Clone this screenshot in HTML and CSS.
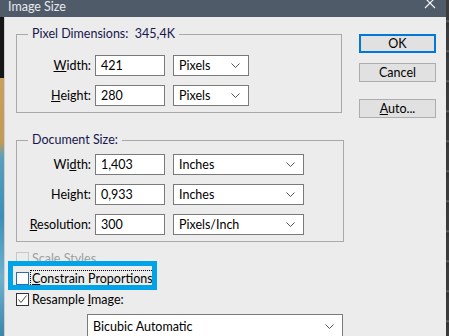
FILE: index.html
```html
<!DOCTYPE html>
<html lang="en">
<head>
    <meta charset="UTF-8">
    <title>Image Size</title>
    <link rel="stylesheet" href="styles.css">
</head>
<body>

<div class="screen">
    <div class="titlebar">
        <span class="title">Image Size</span>
        <svg class="close" width="12" height="12" viewBox="0 0 12 12">
            <path d="M1 1 L11 11 M11 1 L1 11" stroke="#f2f2f2" stroke-width="1.2" fill="none"/>
        </svg>
    </div>
    <div class="strip-left"></div>
    <div class="strip-right"></div>

    <div class="dialog">
        <div class="main">
            <fieldset class="group group-pixels">
                <legend>Pixel Dimensions:&nbsp; 345,4K</legend>
                <div class="row">
                    <label><u>W</u>idth:</label>
                    <div class="field">421</div>
                    <div class="select select-short">Pixels <svg class="chev" width="9" height="5" viewBox="0 0 9 5"><path d="M0.5 0.5 L4.5 4.5 L8.5 0.5" stroke="#555" fill="none"/></svg></div>
                </div>
                <div class="row">
                    <label><u>H</u>eight:</label>
                    <div class="field">280</div>
                    <div class="select select-short">Pixels <svg class="chev" width="9" height="5" viewBox="0 0 9 5"><path d="M0.5 0.5 L4.5 4.5 L8.5 0.5" stroke="#555" fill="none"/></svg></div>
                </div>
            </fieldset>

            <fieldset class="group group-doc">
                <legend>Document Size:</legend>
                <div class="row">
                    <label>Wi<u>d</u>th:</label>
                    <div class="field">1,403</div>
                    <div class="select select-long">Inches <svg class="chev" width="9" height="5" viewBox="0 0 9 5"><path d="M0.5 0.5 L4.5 4.5 L8.5 0.5" stroke="#555" fill="none"/></svg></div>
                </div>
                <div class="row">
                    <label>Hei<u>g</u>ht:</label>
                    <div class="field">0,933</div>
                    <div class="select select-long">Inches <svg class="chev" width="9" height="5" viewBox="0 0 9 5"><path d="M0.5 0.5 L4.5 4.5 L8.5 0.5" stroke="#555" fill="none"/></svg></div>
                </div>
                <div class="row">
                    <label><u>R</u>esolution:</label>
                    <div class="field">300</div>
                    <div class="select select-long">Pixels/Inch <svg class="chev" width="9" height="5" viewBox="0 0 9 5"><path d="M0.5 0.5 L4.5 4.5 L8.5 0.5" stroke="#555" fill="none"/></svg></div>
                </div>
            </fieldset>

            <div class="checks">
                <div class="check disabled">
                    <span class="box"></span>
                    <span class="check-text">Scale Styles</span>
                </div>
                <div class="check focused">
                    <span class="box box-blue"></span>
                    <span class="check-text focus-ring"><u>C</u>onstrain Proportions</span>
                    <div class="highlight"></div>
                </div>
                <div class="check">
                    <span class="box">
                        <svg width="11" height="11" viewBox="0 0 11 11"><path d="M1.5 5.5 L4 8.5 L9.5 1.5" stroke="#333" stroke-width="0.9" fill="none"/></svg>
                    </span>
                    <span class="check-text">Resample <u>I</u>mage:</span>
                </div>
            </div>

            <div class="select select-method">Bicubic Automatic <svg class="chev" width="9" height="5" viewBox="0 0 9 5"><path d="M0.5 0.5 L4.5 4.5 L8.5 0.5" stroke="#555" fill="none"/></svg></div>
        </div>

        <div class="buttons">
            <button class="btn btn-default">OK</button>
            <button class="btn">Cancel</button>
            <button class="btn btn-auto"><u>A</u>uto...</button>
        </div>
    </div>
</div>

</body>
</html>
```

FILE: styles.css
```css
body {
    margin: 0;
    background-color: #2e2e2e;
    font-family: Lato, "Liberation Sans", sans-serif;
    font-size: 12.5px;
    color: #000;
}

.screen {
    display: grid;
    grid-template-columns: 4px 442px 3px;
    grid-template-rows: 17px 319px;
    width: 449px;
    height: 336px;
    overflow: hidden;
}

.titlebar {
    grid-column: 1 / 3;
    grid-row: 1;
    background-color: #505b69;
    display: flex;
    justify-content: space-between;
    align-items: flex-start;
    padding-left: 8px;
    padding-right: 10px;
}

.title {
    color: #e8eaed;
    line-height: 14px;
    font-size: 12.5px;
}

.close {
    margin-top: -3px;
}

.strip-left {
    grid-column: 1;
    grid-row: 2;
    background: linear-gradient(to bottom, #161616 0, #161616 61px, #c9a05c 61px, #c39a58 125px, #5a9fbd 140px, #3d8fb8 200px, #6fb2cf 260px, #3a87ad 319px);
}

.strip-right {
    grid-column: 3;
    grid-row: 1 / 3;
    background: repeating-linear-gradient(to bottom, #3b3b3b 0, #3b3b3b 20px, #6a6a6a 21px, #333 23px, #3b3b3b 30px);
}

.dialog {
    grid-column: 2;
    grid-row: 2;
    background-color: #ececec;
    border-left: 1px solid #cfcfcf;
    display: flex;
    align-items: flex-start;
    padding-left: 11px;
}

.main {
    width: 326px;
    margin-top: 10px;
}

.group {
    margin: 0;
    padding: 0;
    border: 1px solid #a9a9a9;
    min-width: 0;
}

.group legend {
    margin-left: 11px;
    padding: 0 4px;
    line-height: 14px;
    color: #17174d;
}

.group-pixels {
    width: 324px;
    padding-top: 14px;
    padding-bottom: 6px;
}

.group-doc {
    width: 326px;
    margin-top: 20px;
    padding-top: 7px;
    padding-bottom: 6px;
}

.row {
    display: flex;
    align-items: center;
    height: 21px;
    margin-bottom: 9px;
}

.row:last-child {
    margin-bottom: 0;
}

.row label {
    width: 74px;
    margin-right: 4px;
    text-align: right;
}

.field {
    box-sizing: border-box;
    width: 70px;
    height: 21px;
    border: 1px solid #7a7a7a;
    background-color: #fff;
    padding-left: 5px;
    line-height: 19px;
    margin-right: 8px;
}

.select {
    box-sizing: border-box;
    height: 21px;
    border: 1px solid #7a7a7a;
    background-color: #fff;
    padding: 0 8px 0 5px;
    line-height: 19px;
    display: flex;
    justify-content: space-between;
    align-items: center;
}

.select-short {
    width: 76px;
}

.select-long {
    width: 131px;
}

.select-method {
    width: 256px;
    height: 24px;
    margin-left: 71px;
    margin-top: 5px;
}

.checks {
    margin-top: 6px;
}

.check {
    display: flex;
    align-items: center;
    height: 20px;
    position: relative;
}

.check.focused {
    height: 21px;
}

.box {
    box-sizing: border-box;
    width: 13px;
    height: 13px;
    border: 1px solid #333;
    background-color: #fff;
    margin-right: 3px;
    display: flex;
    align-items: center;
    justify-content: center;
}

.box-blue {
    border-color: #2a6fb0;
}

.disabled .box {
    border-color: #c8c8c8;
    background-color: #ececec;
}

.disabled .check-text {
    color: #a0a0a0;
}

.check-text {
    line-height: 15px;
}

.focus-ring {
    outline: 1px dotted #000;
    padding-left: 1px;
    margin-left: -1px;
}

.highlight {
    position: absolute;
    left: -8px;
    top: -7px;
    width: 149px;
    height: 29px;
    box-sizing: border-box;
    border: 5px solid #00a2e8;
    pointer-events: none;
}

.buttons {
    display: flex;
    flex-direction: column;
    margin-top: 17px;
    margin-left: 17px;
}

.btn {
    box-sizing: border-box;
    width: 77px;
    height: 19px;
    padding: 0;
    border: 1px solid #adadad;
    background-color: #e1e1e1;
    font-family: inherit;
    font-size: 12.5px;
    line-height: 16px;
    color: #000;
    margin-bottom: 10px;
}

.btn-default {
    border: 2px solid #0078d7;
}

.btn-auto {
    margin-top: 7px;
}
```
